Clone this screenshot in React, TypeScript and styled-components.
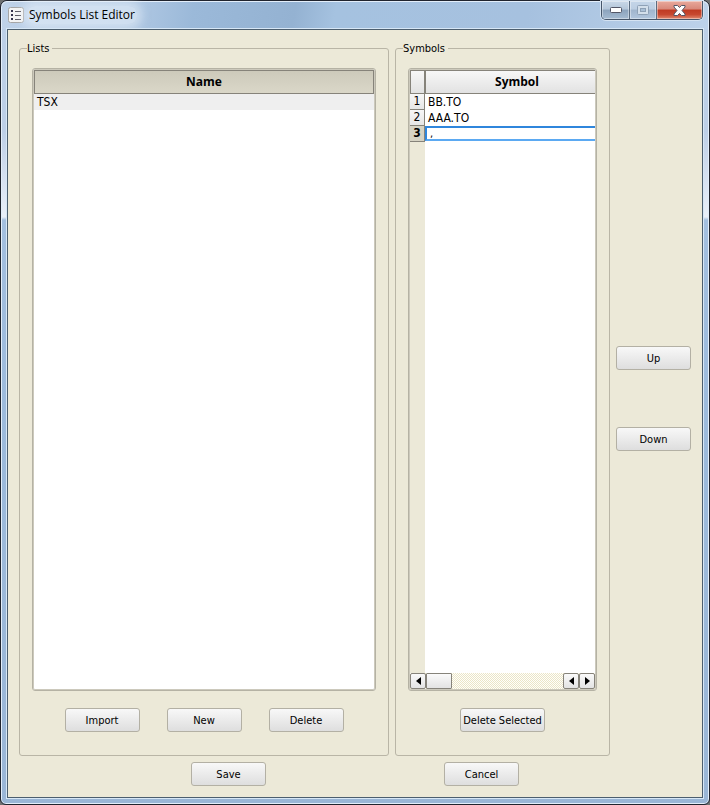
import React from "react";
import styled, { createGlobalStyle, css } from "styled-components";

const Global = createGlobalStyle`
  * { box-sizing: border-box; }
  body { margin: 0; background: #6e7071; }
  body, button, input {
    font-family: "DejaVu Sans Condensed", "Noto Sans", sans-serif;
    font-size: 11px;
    color: #000;
  }
`;

const Window = styled.main`
  height: 100vh;
  display: flex;
  flex-direction: column;
  padding: 0 6px 6px;
  border: 1px solid #20242e;
  border-radius: 7px 7px 6px 6px;
  box-shadow: inset 0 0 0 1px #e3eefa;
  background:
    linear-gradient(#bccfe7 0, #bdcfe7 130px, #e9eff8 216px, #a3bfdf 219px, #9dbbdc 50%, #9ab6d6 100%);
`;

const TitleBar = styled.header`
  display: flex;
  align-items: flex-start;
  height: 28px;
  flex: none;
  margin: 0 -5px;
  padding: 0 5px 0 6px;
  border-top: 1px solid #e3eefa;
  border-radius: 6px 6px 0 0;
  background: linear-gradient(100deg, #bfd2e9 0, #b4cbe5 120px, #9bb9d9 190px, #94b2d2 290px, #a5c2e0 330px, #a6c1df 520px, #bdd2ea 100%);
`;

const AppIcon = styled.svg`
  width: 16px;
  height: 16px;
  margin-top: 5px;
`;

const Title = styled.h1`
  margin: 4px auto 0 3px;
  padding: 0 2px;
  border-radius: 8px;
  font: 12px/18px "Open Sans", sans-serif;
  background: rgba(235, 243, 251, 0.5);
  box-shadow: 0 0 9px 5px rgba(235, 243, 251, 0.5);
`;

const Controls = styled.div`
  display: flex;
  height: 19px;
  margin-top: -1px;
  border: 1px solid #46566a;
  border-top: 0;
  border-radius: 0 0 5px 5px;
  overflow: hidden;
  box-shadow: 0 0 0 1px #d5e3f2;
`;

const ControlButton = styled.button<{ $kind: "minimize" | "maximize" | "close" }>`
  width: ${(p) => (p.$kind === "close" ? 46 : 27)}px;
  padding: 0;
  border: 0;
  border-left: ${(p) => (p.$kind === "minimize" ? 0 : 1)}px solid #5b6c80;
  display: flex;
  align-items: center;
  justify-content: center;
  box-shadow: inset 0 0 0 1px rgba(255, 255, 255, 0.4);
  background: ${(p) =>
    p.$kind === "close"
      ? "linear-gradient(#e9a99c 0, #d8887a 45%, #bf3a22 50%, #c74830 75%, #e08a70 100%)"
      : p.$kind === "minimize"
        ? "linear-gradient(#c9d8e8 0, #b5c7da 45%, #8ca3bc 50%, #a5bbd2 100%)"
        : "linear-gradient(#c4d5e8 0, #bccee2 45%, #a0b5cd 50%, #b1c6de 100%)"};
`;

const Client = styled.div`
  flex: 1;
  min-height: 0;
  display: flex;
  flex-direction: column;
  gap: 6px;
  padding: 11px;
  border: 1px solid #4c5e6e;
  box-shadow: 0 0 0 1px #d7e7f6;
  background: #ece9d8;
`;

const Columns = styled.div`
  flex: 1;
  min-height: 0;
  display: grid;
  grid-template-columns: 370fr 215fr 75px;
  grid-template-rows: minmax(0, 1fr);
  gap: 6px;
`;

const Group = styled.fieldset`
  min-width: 0;
  margin: 0;
  padding: 12px 12px 23px;
  border: 1px solid #b9b5a6;
  border-radius: 3px;
  display: flex;
  flex-direction: column;
  gap: 17px;
`;

const Legend = styled.legend`
  margin-left: -5px;
  padding: 0 3px 0 0;
  line-height: 15px;
`;

const Panel = styled.div`
  flex: 1;
  min-height: 0;
  display: flex;
  flex-direction: column;
  border: 1px solid #b5b2a4;
  border-radius: 3px;
  box-shadow: inset 0 0 0 1px #ccc9bc;
  padding: 1px;
  background: #fff;
`;

const TableArea = styled.div<{ $numbered?: boolean }>`
  flex: 1;
  min-height: 0;
  overflow: hidden;
  ${(p) => p.$numbered && css`background: linear-gradient(90deg, #ece9d8 15px, #fff 15px);`}
`;

const Table = styled.table<{ $overflow?: boolean }>`
  width: ${(p) => (p.$overflow ? "calc(100% + 14px)" : "100%")};
  table-layout: fixed;
  border-collapse: separate;
  border-spacing: 0;
`;

const HeadCell = styled.th<{ $active?: boolean; $narrow?: boolean }>`
  width: ${(p) => (p.$narrow ? "15px" : "auto")};
  height: 24px;
  padding: 0;
  border: 1px solid #86837a;
  font-family: "Open Sans", "Noto Sans", sans-serif;
  font-size: 12px;
  line-height: 16px;
  background: ${(p) =>
    p.$active ? "linear-gradient(#cdcabb, #dad7c8)" : "linear-gradient(#f7f7f7, #e2e2e2)"};
`;

const RowHead = styled.th<{ $active?: boolean }>`
  height: 16px;
  padding: 0;
  border: solid #86837a;
  border-width: 0 1px 1px 0;
  font-size: 12px;
  line-height: 15px;
  font-weight: ${(p) => (p.$active ? "bold" : "normal")};
  background: ${(p) => (p.$active ? "#d6d3c4" : "linear-gradient(#f7f7f7, #e6e6e6)")};
`;

const Cell = styled.td<{ $shaded?: boolean }>`
  height: 16px;
  padding: 0 3px;
  font-size: 12px;
  line-height: 16px;
  background: ${(p) => (p.$shaded ? "#efefef" : "#fff")};
`;

const EditCell = styled(Cell)`
  padding: 0;
  vertical-align: top;
`;

const CellInput = styled.input`
  display: block;
  width: 100%;
  height: 15px;
  padding: 0 3px;
  border-style: solid;
  border-width: 2px 0 2px 2px;
  border-color: #2f86dc #5ba9f2 #5ba9f2 #2f86dc;
  outline: 0;
  line-height: 11px;
`;

const ScrollBar = styled.div`
  display: flex;
  height: 16px;
  flex: none;
  background: repeating-conic-gradient(#ebe5c8 0 25%, #fffffb 0 50%) 0 0 / 2px 2px;
`;

const ScrollButton = styled.button`
  width: 16px;
  padding: 0;
  border: 1px solid #86837a;
  border-radius: 2px;
  display: flex;
  align-items: center;
  justify-content: center;
  background: linear-gradient(#fafafa, #e3e3e3);
`;

const Thumb = styled.div`
  width: 26px;
  margin-right: auto;
  border: 1px solid #86837a;
  border-radius: 1px;
  background: linear-gradient(#fafafa, #e3e3e3);
`;

const PushButton = styled.button`
  min-width: 75px;
  height: 24px;
  padding: 0 2px;
  border: 1px solid #b3b0a4;
  border-radius: 3px;
  white-space: nowrap;
  background: linear-gradient(#f8f8f8, #dedede);
`;

const ButtonRow = styled.div`
  display: flex;
  justify-content: center;
  gap: 27px;
`;

const SideButtons = styled.div`
  display: flex;
  flex-direction: column;
  justify-content: center;
  gap: 57px;
`;

const Footer = styled.footer`
  display: grid;
  grid-template-columns: 172fr 75px 178fr 75px 172fr;

  & > :first-child { grid-column: 2; }
  & > :last-child { grid-column: 4; }
`;

const Arrow = ({ right = false }: { right?: boolean }) => (
  <svg width="5" height="8" viewBox="0 0 5 8" aria-hidden="true">
    <path d={right ? "M0 0 L5 4 L0 8Z" : "M5 0 L0 4 L5 8Z"} fill="#000" />
  </svg>
);

const symbols = ["BB.TO", "AAA.TO"];

export default function App() {
  return (
    <>
      <Global />
      <Window>
        <TitleBar>
          <AppIcon viewBox="0 0 16 16" aria-hidden="true">
            <rect x=".5" y=".5" width="15" height="15" rx="2" fill="#f4f4f4" stroke="#a6a6a6" />
            <path d="M3 3h2v2H3zM3 7h2v2H3zM3 11h2v2H3z" fill="#34344c" />
            <path d="M7 4.500h6M7 8.500h6M7 12.500h6" stroke="#55555f" />
          </AppIcon>
          <Title>Symbols List Editor</Title>
          <Controls>
            <ControlButton $kind="minimize" type="button" aria-label="Minimize">
              <svg width="12" height="6" viewBox="0 0 12 6">
                <rect x=".5" y=".5" width="11" height="5" rx="1" fill="#fff" stroke="#535666" />
              </svg>
            </ControlButton>
            <ControlButton $kind="maximize" type="button" aria-label="Maximize" disabled>
              <svg width="12" height="10" viewBox="0 0 12 10" fill="none">
                <rect x=".5" y=".5" width="11" height="9" rx="1" fill="#d3dfeb" stroke="#8ea1b6" />
                <rect x="3.5" y="3.5" width="5" height="3" fill="#a9bfd6" stroke="#8ea1b6" />
              </svg>
            </ControlButton>
            <ControlButton $kind="close" type="button" aria-label="Close">
              <svg width="13" height="11" viewBox="0 0 13 11">
                <path
                  d="M1 .5h3.500l2 2 2-2H12v1.500L9 5.500l3 3.500v1.500H8.500l-2-2-2 2H1V9l3-3.500L1 2z"
                  fill="#fff"
                  stroke="#535666"
                />
              </svg>
            </ControlButton>
          </Controls>
        </TitleBar>
        <Client>
          <Columns>
            <Group>
              <Legend>Lists</Legend>
              <Panel>
                <TableArea>
                  <Table>
                    <thead>
                      <tr>
                        <HeadCell $active scope="col">Name</HeadCell>
                      </tr>
                    </thead>
                    <tbody>
                      <tr>
                        <Cell $shaded>TSX</Cell>
                      </tr>
                    </tbody>
                  </Table>
                </TableArea>
              </Panel>
              <ButtonRow>
                <PushButton type="button">Import</PushButton>
                <PushButton type="button">New</PushButton>
                <PushButton type="button">Delete</PushButton>
              </ButtonRow>
            </Group>
            <Group>
              <Legend>Symbols</Legend>
              <Panel>
                <TableArea $numbered>
                  <Table $overflow>
                    <thead>
                      <tr>
                        <HeadCell as="td" $narrow />
                        <HeadCell scope="col">Symbol</HeadCell>
                      </tr>
                    </thead>
                    <tbody>
                      {symbols.map((symbol, i) => (
                        <tr key={symbol}>
                          <RowHead scope="row">{i + 1}</RowHead>
                          <Cell>{symbol}</Cell>
                        </tr>
                      ))}
                      <tr>
                        <RowHead scope="row" $active>3</RowHead>
                        <EditCell>
                          <CellInput aria-label="Symbol 3" defaultValue="," />
                        </EditCell>
                      </tr>
                    </tbody>
                  </Table>
                </TableArea>
                <ScrollBar>
                  <ScrollButton type="button" aria-label="Scroll left"><Arrow /></ScrollButton>
                  <Thumb />
                  <ScrollButton type="button" aria-label="Scroll back"><Arrow /></ScrollButton>
                  <ScrollButton type="button" aria-label="Scroll right"><Arrow right /></ScrollButton>
                </ScrollBar>
              </Panel>
              <ButtonRow>
                <PushButton type="button">Delete Selected</PushButton>
              </ButtonRow>
            </Group>
            <SideButtons>
              <PushButton type="button">Up</PushButton>
              <PushButton type="button">Down</PushButton>
            </SideButtons>
          </Columns>
          <Footer>
            <PushButton type="button">Save</PushButton>
            <PushButton type="button">Cancel</PushButton>
          </Footer>
        </Client>
      </Window>
    </>
  );
}
